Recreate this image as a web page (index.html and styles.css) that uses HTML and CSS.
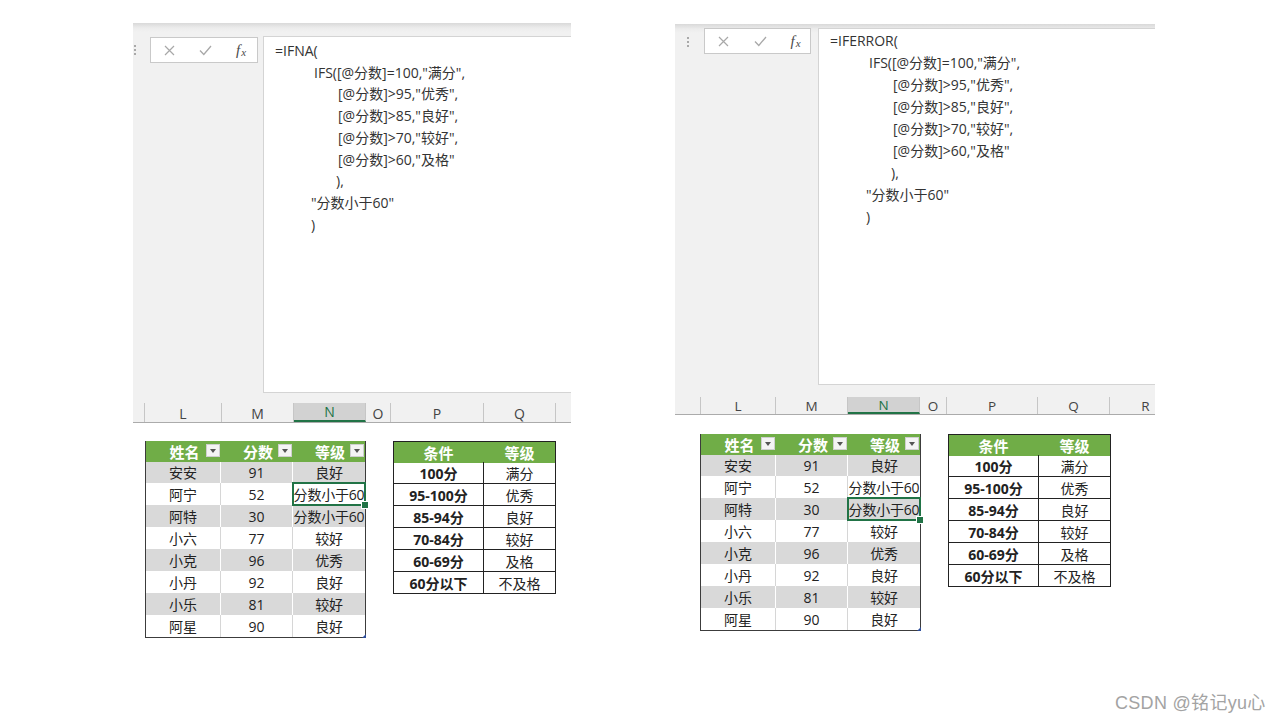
FILE: index.html
```html
<!DOCTYPE html>
<html lang="zh-CN">
<head>
<meta charset="utf-8">
<title>IFNA vs IFERROR</title>
<link rel="stylesheet" href="styles.css">
</head>
<body>
<div class="page">
  <!-- LEFT: IFNA -->
  <section class="group group-left">
    <div class="sheet">
      <div class="fbar">
        <div class="grip"><i></i><i></i><i></i></div>
        <div class="namebox">
          <span class="btn"><svg width="11" height="11" viewBox="0 0 11 11"><path d="M1 1L10 10M10 1L1 10" stroke="#a8a8a8" stroke-width="1.2" fill="none"/></svg></span>
          <span class="btn"><svg width="13" height="11" viewBox="0 0 13 11"><path d="M1 5.5L4.8 9.5L12 1" stroke="#a8a8a8" stroke-width="1.3" fill="none"/></svg></span>
          <span class="btn fx"><i>f</i><i class="x">x</i></span>
        </div>
        <div class="formula">
          <div class="ln">=IFNA(</div>
          <div class="ln in1">IFS([@分数]=100,"满分",</div>
          <div class="ln in2">[@分数]&gt;95,"优秀",</div>
          <div class="ln in2">[@分数]&gt;85,"良好",</div>
          <div class="ln in2">[@分数]&gt;70,"较好",</div>
          <div class="ln in2">[@分数]&gt;60,"及格"</div>
          <div class="ln in3">),</div>
          <div class="ln in4">"分数小于60"</div>
          <div class="ln in4">)</div>
        </div>
      </div>
      <div class="colhead">
        <span class="ch stub"></span>
        <span class="ch w77">L</span>
        <span class="ch w72">M</span>
        <span class="ch w72 on">N</span>
        <span class="ch w25">O</span>
        <span class="ch w93">P</span>
        <span class="ch w72">Q</span>
      </div>
    </div>
    <div class="tables">
      <div class="data">
        <div class="row hd"><span class="c">姓名<b class="dd"></b></span><span class="c">分数<b class="dd"></b></span><span class="c">等级<b class="dd"></b></span></div>
        <div class="row g"><span class="c">安安</span><span class="c">91</span><span class="c">良好</span></div>
        <div class="row w"><span class="c">阿宁</span><span class="c">52</span><span class="c sel">分数小于60</span></div>
        <div class="row g"><span class="c">阿特</span><span class="c">30</span><span class="c">分数小于60</span></div>
        <div class="row w"><span class="c">小六</span><span class="c">77</span><span class="c">较好</span></div>
        <div class="row g"><span class="c">小克</span><span class="c">96</span><span class="c">优秀</span></div>
        <div class="row w"><span class="c">小丹</span><span class="c">92</span><span class="c">良好</span></div>
        <div class="row g"><span class="c">小乐</span><span class="c">81</span><span class="c">较好</span></div>
        <div class="row w"><span class="c">阿星</span><span class="c">90</span><span class="c">良好</span></div>
      </div>
      <div class="cond">
        <div class="crow hd"><span class="c">条件</span><span class="c">等级</span></div>
        <div class="crow"><span class="c b">100分</span><span class="c">满分</span></div>
        <div class="crow"><span class="c b">95-100分</span><span class="c">优秀</span></div>
        <div class="crow"><span class="c b">85-94分</span><span class="c">良好</span></div>
        <div class="crow"><span class="c b">70-84分</span><span class="c">较好</span></div>
        <div class="crow"><span class="c b">60-69分</span><span class="c">及格</span></div>
        <div class="crow"><span class="c b">60分以下</span><span class="c">不及格</span></div>
      </div>
    </div>
  </section>

  <!-- RIGHT: IFERROR -->
  <section class="group group-right">
    <div class="sheet">
      <div class="fbar">
        <div class="grip"><i></i><i></i><i></i></div>
        <div class="namebox">
          <span class="btn"><svg width="11" height="11" viewBox="0 0 11 11"><path d="M1 1L10 10M10 1L1 10" stroke="#a8a8a8" stroke-width="1.2" fill="none"/></svg></span>
          <span class="btn"><svg width="13" height="11" viewBox="0 0 13 11"><path d="M1 5.5L4.8 9.5L12 1" stroke="#a8a8a8" stroke-width="1.3" fill="none"/></svg></span>
          <span class="btn fx"><i>f</i><i class="x">x</i></span>
        </div>
        <div class="formula">
          <div class="ln">=IFERROR(</div>
          <div class="ln in1">IFS([@分数]=100,"满分",</div>
          <div class="ln in2">[@分数]&gt;95,"优秀",</div>
          <div class="ln in2">[@分数]&gt;85,"良好",</div>
          <div class="ln in2">[@分数]&gt;70,"较好",</div>
          <div class="ln in2">[@分数]&gt;60,"及格"</div>
          <div class="ln in3">),</div>
          <div class="ln in4">"分数小于60"</div>
          <div class="ln in4">)</div>
        </div>
      </div>
      <div class="colhead">
        <span class="ch stub"></span>
        <span class="ch w75">L</span>
        <span class="ch w72">M</span>
        <span class="ch w72 on">N</span>
        <span class="ch w27">O</span>
        <span class="ch w91">P</span>
        <span class="ch w72">Q</span>
        <span class="ch w72">R</span>
      </div>
    </div>
    <div class="tables">
      <div class="data">
        <div class="row hd"><span class="c">姓名<b class="dd"></b></span><span class="c">分数<b class="dd"></b></span><span class="c">等级<b class="dd"></b></span></div>
        <div class="row g"><span class="c">安安</span><span class="c">91</span><span class="c">良好</span></div>
        <div class="row w"><span class="c">阿宁</span><span class="c">52</span><span class="c">分数小于60</span></div>
        <div class="row g"><span class="c">阿特</span><span class="c">30</span><span class="c sel">分数小于60</span></div>
        <div class="row w"><span class="c">小六</span><span class="c">77</span><span class="c">较好</span></div>
        <div class="row g"><span class="c">小克</span><span class="c">96</span><span class="c">优秀</span></div>
        <div class="row w"><span class="c">小丹</span><span class="c">92</span><span class="c">良好</span></div>
        <div class="row g"><span class="c">小乐</span><span class="c">81</span><span class="c">较好</span></div>
        <div class="row w"><span class="c">阿星</span><span class="c">90</span><span class="c">良好</span></div>
      </div>
      <div class="cond">
        <div class="crow hd"><span class="c">条件</span><span class="c">等级</span></div>
        <div class="crow"><span class="c b">100分</span><span class="c">满分</span></div>
        <div class="crow"><span class="c b">95-100分</span><span class="c">优秀</span></div>
        <div class="crow"><span class="c b">85-94分</span><span class="c">良好</span></div>
        <div class="crow"><span class="c b">70-84分</span><span class="c">较好</span></div>
        <div class="crow"><span class="c b">60-69分</span><span class="c">及格</span></div>
        <div class="crow"><span class="c b">60分以下</span><span class="c">不及格</span></div>
      </div>
    </div>
  </section>
</div>
<div class="watermark">CSDN @铭记yu心</div>
</body>
</html>
```

FILE: styles.css
```css
* { box-sizing: border-box; }
html, body { margin: 0; padding: 0; background: #fff; }
body {
  width: 1280px;
  height: 720px;
  overflow: hidden;
  position: relative;
  font-family: "Open Sans", "Noto Sans CJK SC", sans-serif;
  color: #222;
}

.page {
  display: flex;
  align-items: flex-start;
  padding-left: 133px;
}

.group-left { width: 438px; padding-top: 23px; }
.group-right { width: 480px; margin-left: 104px; padding-top: 24px; }

/* ---------- Excel formula-bar screenshot ---------- */
.sheet {
  background: linear-gradient(#d9d9d9 0, #ececec 5px, #f1f1f1 9px, #f1f1f1 100%);
  overflow: hidden;
}

.fbar { display: flex; align-items: flex-start; }
.group-left .fbar { padding-top: 13px; }
.group-right .fbar { padding-top: 4px; }

.grip {
  display: flex;
  flex-direction: column;
  gap: 2px;
}
.grip i { display: block; width: 2px; height: 2px; background: #a9a9a9; }
.group-left .grip { width: 17px; padding-left: 1px; margin-top: 9px; }
.group-right .grip { width: 29px; padding-left: 12px; margin-top: 9px; }

.namebox {
  display: grid;
  grid-template-columns: 36px 36px 36px;
  align-items: center;
  justify-items: center;
  height: 26px;
  background: #fff;
  border: 1px solid #c9c9c9;
}
.group-left .namebox { width: 108px; margin-top: 1px; margin-right: 5px; }
.group-right .namebox { width: 107px; margin-right: 7px; grid-template-columns: 36px 38px 33px; }

.btn { display: flex; align-items: center; justify-content: center; }
.fx {
  font-family: "Liberation Serif", "DejaVu Serif", serif;
  color: #4a4a4a;
  font-size: 15px;
  line-height: 1;
}
.fx .x { font-size: 11px; margin-left: 1px; position: relative; top: 2px; }

.formula {
  flex: 1;
  background: #fff;
  border-left: 1px solid #d4d4d4;
  border-top: 1px solid #d4d4d4;
  border-bottom: 1px solid #d4d4d4;
  color: #333;
  font-size: 14px;
}
.ln { white-space: nowrap; }
.group-left .formula { height: 357px; padding: 3px 0 0 11px; line-height: 21.7px; }
.group-right .formula { height: 357px; padding: 1px 0 0 11px; line-height: 22px; }

.in1 { padding-left: 39px; }
.in2 { padding-left: 63px; }
.in3 { padding-left: 61px; }
.in4 { padding-left: 36px; }

/* ---------- column letters ---------- */
.colhead {
  display: flex;
  height: 20px;
  border-bottom: 1px solid #ababab;
  white-space: nowrap;
}
.group-left .colhead { margin-top: 10px; }
.group-right .colhead { margin-top: 12px; height: 18px; }

.ch {
  flex: none;
  display: flex;
  align-items: center;
  justify-content: center;
  border-right: 1px solid #c6c6c6;
  color: #444;
  font-size: 14px;
  line-height: 16px;
  padding-top: 2px;
}
.ch.on {
  background: #d2d2d2;
  color: #217346;
  border-bottom: 2px solid #217346;
  padding-top: 1px;
}
.group-right .ch { font-size: 13.5px; padding-top: 1px; }
.group-right .ch.on { padding-top: 0; }
.stub { width: 12px; }
.group-right .stub { width: 26px; }
.w25 { width: 25px; }
.w27 { width: 27px; }
.w72 { width: 72px; }
.w75 { width: 75px; }
.w77 { width: 77px; }
.w91 { width: 91px; }
.w93 { width: 93px; }

/* ---------- tables ---------- */
.tables {
  display: flex;
  align-items: flex-start;
  gap: 27px;
}
.group-left .tables { margin-top: 18px; padding-left: 12px; }
.group-right .tables { margin-top: 19px; padding-left: 25px; }

.data {
  position: relative;
  width: 221px;
  border: 1px solid #3c3c3c;
  border-top: 0;
}
.data::after {
  content: "";
  position: absolute;
  right: -1px;
  bottom: -1px;
  border: 2px solid transparent;
  border-right-color: #2f4f9c;
  border-bottom-color: #2f4f9c;
}

.row {
  display: grid;
  grid-template-columns: 75px 72px 72px;
  height: 22px;
}
.row .c {
  display: flex;
  align-items: center;
  justify-content: center;
  font-size: 14px;
  white-space: nowrap;
  border-right: 1px solid #d6d6d6;
}
.row .c:last-child { border-right: 0; letter-spacing: -0.2px; }
.row.g .c { background: #d9d9d9; border-right-color: #fff; }
.row.w .c { background: #fff; }

.row.hd { height: 20px; background: #70ad47; }
.row.hd .c {
  position: relative;
  background: #70ad47;
  border-right: 0;
  color: #fff;
  font-size: 15px;
  font-weight: 700;
  padding-left: 2px;
  letter-spacing: 0;
}
.dd {
  position: absolute;
  right: 1px;
  top: 3px;
  width: 14px;
  height: 13px;
  background: #f4f4f4;
  border: 1px solid #cfcfcf;
}
.dd::after {
  content: "";
  position: absolute;
  left: 3px;
  top: 4px;
  border-left: 3.5px solid transparent;
  border-right: 3.5px solid transparent;
  border-top: 4px solid #555;
}

.sel { position: relative; z-index: 2; }
.sel::after {
  content: "";
  position: absolute;
  left: -1px;
  right: -1px;
  top: -1px;
  bottom: -1px;
  border: 2px solid #217346;
}
.sel::before {
  content: "";
  position: absolute;
  right: -4px;
  bottom: -4px;
  width: 6px;
  height: 6px;
  background: #217346;
  border: 1px solid #fff;
  z-index: 3;
}

.cond {
  width: 163px;
  border-top: 1px solid #222;
  border-left: 1px solid #222;
}
.crow {
  display: grid;
  grid-template-columns: 90px 72px;
  height: 22px;
}
.crow .c {
  display: flex;
  align-items: center;
  justify-content: center;
  font-size: 14px;
  border-right: 1px solid #222;
  border-bottom: 1px solid #222;
  white-space: nowrap;
}
.crow .c.b { font-weight: 700; }
.crow.hd { height: 20px; }
.crow.hd .c {
  background: #70ad47;
  color: #fff;
  font-size: 15px;
  font-weight: 700;
  border-bottom: 0;
}
.crow.hd .c:first-child { border-right-color: #70ad47; }

/* ---------- watermark ---------- */
.watermark {
  position: absolute;
  left: 1115px;
  top: 688px;
  font-family: "Liberation Sans", "Noto Sans CJK SC", sans-serif;
  font-size: 18px;
  color: #a3a3a3;
  white-space: nowrap;
  letter-spacing: 0.3px;
}
```
